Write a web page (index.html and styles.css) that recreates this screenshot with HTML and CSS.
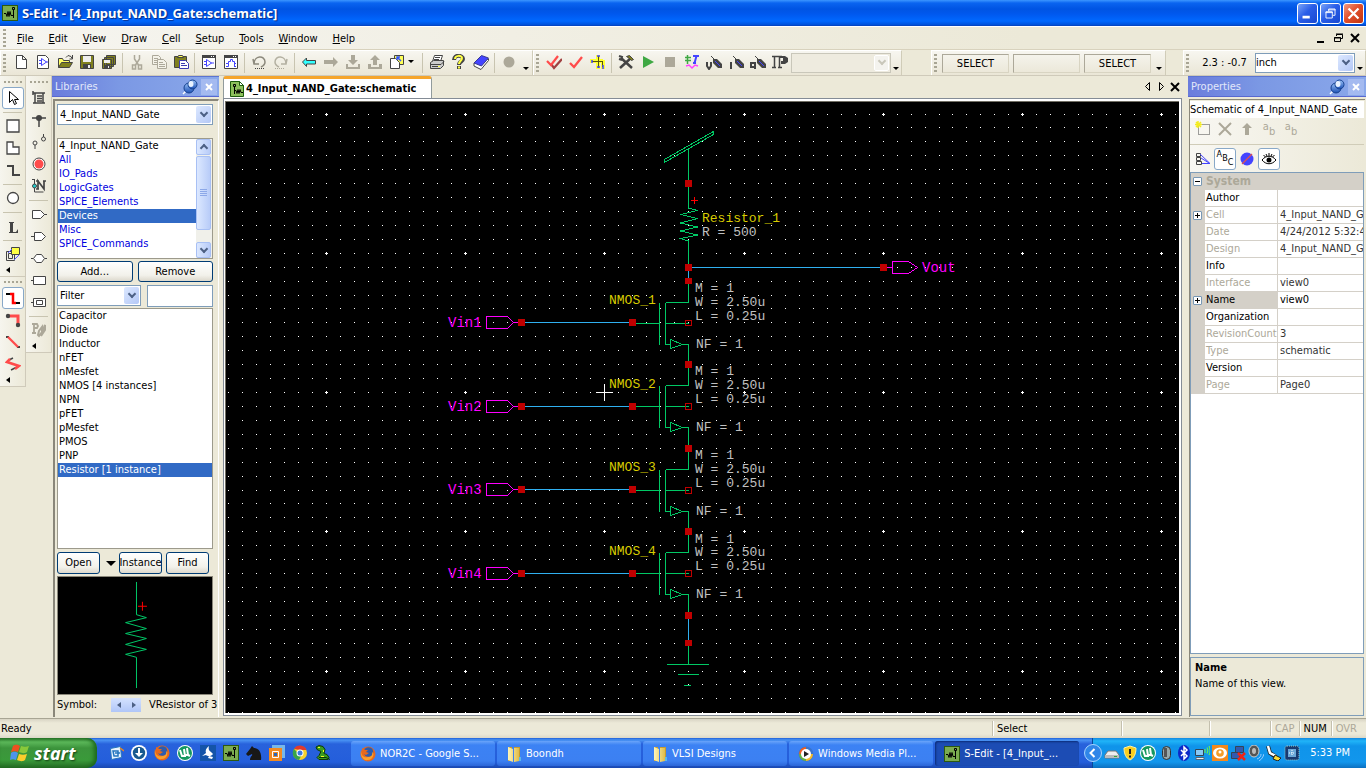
FILE: index.html
```html
<!DOCTYPE html>
<html lang="en">
<head>
<meta charset="utf-8">
<title>S-Edit - [4_Input_NAND_Gate:schematic]</title>
<link rel="stylesheet" href="styles.css">
</head>
<body>
<svg class="defs" aria-hidden="true">
  <defs>
    <linearGradient id="gBlue" x1="0" y1="0" x2="0" y2="1"><stop offset="0" stop-color="#9cc4f8"/><stop offset="1" stop-color="#1b4fb4"/></linearGradient>
    <linearGradient id="gGold" x1="0" y1="0" x2="1" y2="0"><stop offset="0" stop-color="#fff6b8"/><stop offset="1" stop-color="#e0bc48"/></linearGradient>
    <symbol id="sedit" viewBox="0 0 16 16"><path fill="#2c5a10" d="M0 0h16v16H0z"/><path fill="#7cac50" d="M1 1h14v14H1z"/><path fill="none" stroke="#000" d="M2 8.500h2l1 3 1-5 1 5 1-5 1 4h2M11.500 5v8"/><path fill="none" stroke="#000" d="M10.500 2.500h2v2h-2z"/></symbol>
    <symbol id="seditdoc" viewBox="0 0 16 16"><path fill="#8cc05c" stroke="#1c5c0c" d="M1.500 .5h9l4 4v11h-13z"/><path fill="#fff" stroke="#1c5c0c" d="M10.500 .5v4h4z"/><path fill="none" stroke="#000" d="M5.500 6v7M5 9.500h2l1 3 1-4 1 4 1-4 1 3h2M4.500 3.500h2v2h-2z"/></symbol>
    <symbol id="doc" viewBox="0 0 16 16"><path fill="#fff" stroke="#444" d="M3.500 1.500h6l4 4v9h-10zM9.500 1.500v4h4"/></symbol>
    <symbol id="docgate" viewBox="0 0 16 16"><path fill="#fff" stroke="#444" d="M2.500 1.500h8l3 3v10h-11z"/><path fill="none" stroke="#44f" d="M4 6.500h2M4 9.500h2M6.500 4.500v7l5-3.500zM11 8h2"/></symbol>
    <symbol id="open" viewBox="0 0 16 16"><path fill="#ffff66" stroke="#444" d="M1.500 13.500v-9h4l1 2h6v2"/><path fill="#80801e" stroke="#444" d="M1.500 13.500l3-5h11l-3 5z"/><path fill="none" stroke="#444" d="M9 3.500l2-2 3 1 1 2M15.500 1v4h-3"/></symbol>
    <symbol id="save" viewBox="0 0 16 16"><path fill="#80801e" stroke="#444" d="M1.500 1.500h13v13h-13z"/><path fill="#eee" d="M4 2h8v6H4z"/><path fill="#444" d="M4 10h8v4H4z"/><path fill="#eee" d="M9 11h2v3H9z"/></symbol>
    <symbol id="saveall" viewBox="0 0 16 16"><path fill="#80801e" stroke="#444" d="M5.500 1.500h9v9h-9zM3.500 3.500h9v9h-9zM1.500 5.500h9v9h-9z"/><path fill="#eee" d="M3 6h6v3H3z"/><path fill="#444" d="M3 11h6v3H3z"/><path fill="#eee" d="M7 12h1v2H7z"/></symbol>
    <symbol id="cut" viewBox="0 0 16 16"><path fill="none" stroke="#aca899" stroke-width="1.500" d="M5.500 1v4l4 6M10.500 1v4l-4 6"/><path fill="none" stroke="#aca899" stroke-width="1.500" d="M3.500 11h3v4h-3zM9.500 11h3v4h-3z"/></symbol>
    <symbol id="copy" viewBox="0 0 16 16"><path fill="#f4f2e8" stroke="#aca899" d="M1.500 1.500h6l2 2v7h-8zM3 4.500h4M3 6.500h4M3 8.500h4"/><path fill="#f4f2e8" stroke="#aca899" d="M6.500 5.500h6l3 3v6h-9zM8 8.500h4M8 10.500h6M8 12.500h6"/></symbol>
    <symbol id="paste" viewBox="0 0 16 16"><path fill="#80801e" stroke="#444" d="M1.500 2.500h12v11h-12z"/><path fill="#ffff55" stroke="#444" d="M4.500 3.500l1-2h4l1 2z"/><path fill="#fff" stroke="#3c3cb0" d="M6.500 6.500h6l3 3v5h-9zM8 9.500h4M8 11.500h6"/></symbol>
    <symbol id="wgate" viewBox="0 0 16 16"><path fill="#fff" stroke="#444" d="M1.500 1.500h13v13h-13z"/><path fill="#444" d="M1 1h14v3H1z"/><path fill="#fff" d="M10 2h1v1h-1zM12 2h1v1h-1z"/><path fill="none" stroke="#44f" d="M3 7.500h2M3 10.500h2M5.500 5.500v7l5-3.500zM10 9h3"/></symbol>
    <symbol id="wwave" viewBox="0 0 16 16"><path fill="#fff" stroke="#444" d="M1.500 1.500h13v13h-13z"/><path fill="#444" d="M1 1h14v3H1z"/><path fill="#fff" d="M10 2h1v1h-1zM12 2h1v1h-1z"/><path fill="none" stroke="#44f" d="M3 12.500h2.500v-3H3M5.500 9.500v-2h2v-2h2v2h2v5M13 9.500h-1.500M13 12.500h-2"/></symbol>
    <symbol id="undo" viewBox="0 0 16 16"><path fill="none" stroke="#8c897c" stroke-width="1.500" d="M3 10c0-9 11-9 11-2 0 3-2 4-4 5M2 5l1 5h5"/><path stroke="#444" stroke-dasharray="1 1" d="M4 14.500h10"/></symbol>
    <symbol id="redo" viewBox="0 0 16 16"><path fill="none" stroke="#b4b1a2" stroke-width="1.500" d="M13 10c0-9-11-9-11-2 0 3 2 4 4 5M14 5l-1 5H8"/><path stroke="#aca899" stroke-dasharray="1 1" d="M2 14.500h10"/></symbol>
    <symbol id="back" viewBox="0 0 16 16"><path fill="#3ff" stroke="#444" d="M1.500 8l4-4v2.500h9v3.500h-9v2.500z"/></symbol>
    <symbol id="fwd" viewBox="0 0 16 16"><path fill="#aca899" d="M15 8l-5-5v3H1v4h9v3z"/></symbol>
    <symbol id="down" viewBox="0 0 16 16"><path fill="#aca899" d="M6 1h4v5h3l-5 5-5-5h3zM1 10h2v3h10v-3h2v5H1z"/></symbol>
    <symbol id="up" viewBox="0 0 16 16"><path fill="#aca899" d="M6 11h4V6h3L8 1 3 6h3zM1 10h3v3h8v-3h3v5H1z"/></symbol>
    <symbol id="sheet" viewBox="0 0 16 16"><path fill="#ff5" stroke="#444" d="M5.500 1.500h9v9h-9z"/><path fill="#fff" stroke="#444" d="M1.500 4.500h5l4 4v6h-9z"/><path fill="none" stroke="#35f" stroke-width="1.500" d="M8 3l4 4M8 6V3h3"/></symbol>
    <symbol id="print" viewBox="0 0 16 16"><path fill="#fff" stroke="#444" d="M5.500 1.500h8l-2 6h-8z"/><path fill="#ccc" stroke="#444" d="M1.500 8.500l3-2h10v5l-3 3h-10z"/><path fill="none" stroke="#444" d="M6 3.500h5M5 5.500h5M2 10.500h10l3-3M3 12.500h8"/><path fill="#ff4" d="M9 12h2v1H9z"/></symbol>
    <symbol id="help" viewBox="0 0 16 16"><path fill="none" stroke="#444" stroke-width="4" d="M3 6c0-6 9-5 9-1 0 3-4 2-4 6M8 12v3"/><path fill="none" stroke="#ff4" stroke-width="2" d="M4 5c0-4 7-4 7-1 0 3-3 3-3 6M8 12.500v2"/></symbol>
    <symbol id="book" viewBox="0 0 16 16"><path fill="#fff" stroke="#444" d="M1 9v3l7 3.500 7.500-9V5z"/><path fill="#44f" stroke="#3a3a90" d="M1 9l7.500-7.500 7 2.500L8.500 12z"/></symbol>
    <symbol id="rec" viewBox="0 0 16 16"><circle cx="8" cy="8" r="5.500" fill="#aca899"/></symbol>
    <symbol id="dcheck" viewBox="0 0 16 16"><path fill="none" stroke="#a04040" stroke-width="2.200" d="M5 10l3 4 8-9"/><path fill="none" stroke="#ff4b4b" stroke-width="2.200" d="M1 7l4 4 7-9"/></symbol>
    <symbol id="check" viewBox="0 0 16 16"><path fill="none" stroke="#ff4b4b" stroke-width="2.300" d="M2 9l4 4 8-10"/></symbol>
    <symbol id="net" viewBox="0 0 16 16"><path fill="none" stroke="#ff3" stroke-width="4" d="M8 1v14M1 7h12M13 6v9M2 5v4"/><path fill="none" stroke="#55550c" d="M8.500 2v12M2 7.500h11M12.500 8v5"/><path fill="none" stroke="#44f" stroke-width="1.500" d="M7 2h3M2 6v3M13 11v4M7 13h3"/></symbol>
    <symbol id="tools" viewBox="0 0 16 16"><path stroke="#444" stroke-width="2.500" d="M3 4l11 10M13 4L2 14"/><path fill="none" stroke="#444" stroke-width="2" d="M1 2l3 1-1 3M1 5l3 1"/><path fill="#80801e" stroke="#444" d="M8.500 2.500l3-1 4 4-2 1-2-2z"/></symbol>
    <symbol id="play" viewBox="0 0 16 16"><path fill="#3fa843" d="M3 2l11 6-11 6z"/></symbol>
    <symbol id="stop" viewBox="0 0 16 16"><path fill="#aca899" d="M3 3h10v10H3z"/></symbol>
    <symbol id="tline" viewBox="0 0 16 16"><path stroke="#3fa843" stroke-width="1.500" d="M3.500 1v9M1 3.500h6M1 6.500h6"/><path fill="none" stroke="#44f" stroke-width="2" d="M9 2h6M12.500 2l-2 7M9 9h3"/><path fill="none" stroke="#f4f" stroke-width="1.500" d="M2 12l3-1 3 3 3-3 3 1"/></symbol>
    <symbol id="probeV" viewBox="0 0 16 16"><path fill="none" stroke="#444" stroke-width="2" d="M1 8v4l2 3 2-3V8"/><path stroke="#444" d="M5 2l4 4"/><path fill="#444" d="M7 5h4l5 5v4h-4l-5-5z"/><path stroke="#44f" d="M9 7l5 5"/></symbol>
    <symbol id="probeI" viewBox="0 0 16 16"><path stroke="#444" stroke-width="2" d="M3 8v7"/><path stroke="#444" d="M5 2l4 4"/><path fill="#444" d="M7 5h4l5 5v4h-4l-5-5z"/><path stroke="#44f" d="M9 7l5 5"/></symbol>
    <symbol id="probeQ" viewBox="0 0 16 16"><path fill="none" stroke="#444" stroke-width="2" d="M1 9h4v4H1zM5 9v6"/><path stroke="#444" d="M5 2l4 4"/><path fill="#444" d="M7 5h4l5 5v4h-4l-5-5z"/><path stroke="#44f" d="M9 7l5 5"/></symbol>
    <symbol id="ip" viewBox="0 0 16 16"><path fill="none" stroke="#444" stroke-width="1.500" d="M0 2.500h10M0 13.500h4M6 13.500h4M2.500 2v12M7.500 2v12"/><path fill="#444" d="M8 2h5l3 2v4l-3 2H9V7h2V4H8z"/></symbol>
    <symbol id="arrow" viewBox="0 0 16 16"><path fill="#fff" stroke="#000" d="M4.500 1.500v11l3-3 2 5 2-1-2-4h4z"/></symbol>
    <symbol id="square" viewBox="0 0 16 16"><path fill="#fff" stroke="#444" stroke-width="1.300" d="M2 2h12v12H2z"/></symbol>
    <symbol id="poly" viewBox="0 0 16 16"><path fill="#fff" stroke="#444" stroke-width="1.300" d="M2 2h6v5h6v7H2z"/></symbol>
    <symbol id="step" viewBox="0 0 16 16"><path fill="none" stroke="#444" stroke-width="2" d="M2 4h6v9h7"/></symbol>
    <symbol id="circle" viewBox="0 0 16 16"><circle cx="8" cy="8" r="5.500" fill="#fff" stroke="#444" stroke-width="1.300"/></symbol>
    <symbol id="ell" viewBox="0 0 16 16"><path fill="#444" d="M4 4h5v1H8v9h3l2-3v4H4v-1h1V5H4z"/></symbol>
    <symbol id="inst" viewBox="0 0 16 16"><path fill="none" stroke="#444" d="M1.500 5.500h8v9h-8zM3.500 7.500h4v5h-4z"/><path fill="#ff4" stroke="#444" d="M6.500 1.500h8v7h-8z"/><path stroke="#55f" d="M3 7l4-4M9 14l5-5"/></symbol>
    <symbol id="wire" viewBox="0 0 16 16"><path fill="none" stroke="#000" stroke-width="2" d="M1 4h7M9 13h6"/><path fill="none" stroke="#f00" stroke-width="2.500" d="M5 4h3v9h3"/></symbol>
    <symbol id="wire2" viewBox="0 0 16 16"><path fill="none" stroke="#ff4b4b" stroke-width="3" d="M3 4h10v8"/><circle cx="3" cy="4" r="2.200" fill="#444"/><circle cx="13" cy="13" r="2.200" fill="#444"/></symbol>
    <symbol id="wire3" viewBox="0 0 16 16"><path stroke="#444" stroke-width="2" d="M1 3h3M12 13h3"/><path stroke="#ff4b4b" stroke-width="2.300" d="M3 3l10 10"/></symbol>
    <symbol id="wire4" viewBox="0 0 16 16"><path fill="none" stroke="#444" stroke-width="1.500" d="M8 2L4 4M6 14l8-4"/><path fill="none" stroke="#ff4b4b" stroke-width="2.500" d="M5 3L2 6l12 4-4 3"/></symbol>
    <symbol id="symb" viewBox="0 0 16 16"><path fill="none" stroke="#444" stroke-width="1.500" d="M2 3h12M2 13h12M4 3v10M12 3v10M2 1v4M6 6h5M6 8.500h5M6 11h5"/></symbol>
    <symbol id="junction" viewBox="0 0 16 16"><path stroke="#444" stroke-width="1.500" d="M1 6h14M8 6v9"/><circle cx="8" cy="6" r="3" fill="#444"/></symbol>
    <symbol id="ports" viewBox="0 0 16 16"><g fill="none" stroke="#444"><circle cx="4" cy="9" r="2"/><circle cx="12.500" cy="5" r="2"/><path d="M4 11v4M12.500 0v3"/></g></symbol>
    <symbol id="target" viewBox="0 0 16 16"><circle cx="8" cy="8" r="6" fill="#fff" stroke="#444"/><circle cx="8" cy="8" r="4.500" fill="#ff4b4b"/></symbol>
    <symbol id="netn" viewBox="0 0 16 16"><path fill="none" stroke="#444" d="M3.500 1v13h9M1 1.500h3"/><path fill="none" stroke="#444" stroke-width="1.700" d="M7 11V3l6 8V3M5 3h3M12 3h3M5 11h3"/><circle cx="3.500" cy="8" r="2" fill="#2cc" stroke="#444"/></symbol>
    <symbol id="pin1" viewBox="0 0 16 16"><path fill="#fff" stroke="#444" d="M1.500 4.500h8l4 4-4 4h-8zM13 8.500h3"/></symbol>
    <symbol id="pin2" viewBox="0 0 16 16"><path fill="#fff" stroke="#444" d="M3.500 4.500h7l4 4-4 4h-7zM0 8.500h3"/></symbol>
    <symbol id="pin3" viewBox="0 0 16 16"><path fill="#fff" stroke="#444" d="M0 8.500h2M2.500 8.500l3-4h5l3 4-3 4h-5zM14 8.500h2"/></symbol>
    <symbol id="pin4" viewBox="0 0 16 16"><path fill="#fff" stroke="#444" d="M2.500 4.500h12v8h-12zM0 8.500h2"/></symbol>
    <symbol id="pin5" viewBox="0 0 16 16"><path fill="#fff" stroke="#444" d="M2.500 4.500h12v8h-12zM5.500 6.500h6v4h-6zM0 8.500h2"/></symbol>
    <symbol id="pgray" viewBox="0 0 16 16"><path fill="none" stroke="#aca899" stroke-width="1.800" d="M1 2h5l1 2-1 2H3M3 2v9M1 11h4"/><path fill="none" stroke="#aca899" stroke-width="2" d="M7 13l1-4 3-4v5l-3 4zM11 10l3-7v5l-4 6"/></symbol>
    <symbol id="pushpin" viewBox="0 0 16 16"><path stroke="#fff" stroke-width="1.500" d="M1 15l5-5"/><circle cx="7" cy="9" r="5" fill="url(#gBlue)" stroke="#15408e"/><circle cx="10.500" cy="5.500" r="4.500" fill="url(#gBlue)" stroke="#15408e"/><ellipse cx="9" cy="5" rx="2.500" ry="3" fill="#e8f2ff"/></symbol>
    <symbol id="pnew" viewBox="0 0 16 16"><path fill="none" stroke="#444" stroke-dasharray="1 1" d="M3.500 3.500h11v10h-11z"/><path stroke="#f4ec20" stroke-width="1.500" d="M3 0v7M0 3.500h7M1 1l5 5M6 1L1 6"/></symbol>
    <symbol id="px" viewBox="0 0 16 16"><path stroke="#aca899" stroke-width="2" d="M2 2l12 12M14 2L2 14"/></symbol>
    <symbol id="pup" viewBox="0 0 16 16"><path fill="#aca899" d="M8 2l5 5h-3v7H6V7H3z"/></symbol>
    <symbol id="ptree" viewBox="0 0 16 16"><path fill="none" stroke="#444" d="M1.500 2.500h4v3h-4zM1.500 6.500h4v3h-4zM1.500 10.500h5v3h-5z"/><path fill="none" stroke="#44f" d="M5 3l10 9.500H7M6 7l8 5"/></symbol>
    <symbol id="pno" viewBox="0 0 16 16"><circle cx="8" cy="8" r="6.500" fill="#44f"/><path stroke="#e05050" stroke-width="1.300" d="M3 13L13 3"/></symbol>
    <symbol id="eye" viewBox="0 0 16 16"><path fill="#fff" stroke="#000" d="M1 9c4-5 10-5 14 0-4 5-10 5-14 0z"/><circle cx="8" cy="9" r="2.500" fill="#000"/><path stroke="#000" d="M2.500 4l2 2M8 2v3M13.500 4l-2 2M5 3l1 2M11 3l-1 2"/></symbol>
    <symbol id="ff" viewBox="0 0 16 16"><circle cx="8" cy="8" r="7.500" fill="#e8691c"/><circle cx="8.500" cy="6" r="4.800" fill="#2d5cae"/><path fill="#f9a02c" d="M1 4c0 6 3 8 7 7 3 0 5-2 4-5 3 1 1 8-4 8C3 15 0 10 1 4z"/><path fill="#e8691c" d="M2 2l3 2h3L6 6l3 1-3 2-4-2z"/></symbol>
    <symbol id="ut" viewBox="0 0 16 16"><circle cx="8" cy="8" r="8" fill="#fff"/><circle cx="8" cy="8" r="7" fill="#149860"/><path fill="none" stroke="#fff" stroke-width="2" d="M3 5l2 6h3l-1-7M8 10h3l-1-7M11 10l2 1"/></symbol>
    <symbol id="edit" viewBox="0 0 16 16"><path fill="#e8f4ff" stroke="#2a78bc" d="M2.500 3.500l10-2 1 11-10 2z"/><path fill="none" stroke="#2476bf" stroke-width="1.500" d="M5 6h5v5H6zM7 8h5"/><path stroke="#e88422" stroke-width="1.500" d="M12 3l4 3"/></symbol>
    <symbol id="dl" viewBox="0 0 16 16"><circle cx="8" cy="8" r="8" fill="#fff"/><circle cx="8" cy="8" r="6.200" fill="#195a90"/><path fill="#fff" d="M7 3h2v5h3l-4 4-4-4h3z"/></symbol>
    <symbol id="bird" viewBox="0 0 16 16"><path fill="#1454a8" d="M0 0h16v16H0z"/><path fill="#fff" d="M9 1c-3 2-4 5-3 7l-4 3 4-1c2 2 6 1 7-1l-2-2c-2-1-3-3-2-6z"/><path fill="#fff" d="M9 11l4 1-1 2-4-1z"/></symbol>
    <symbol id="knight" viewBox="0 0 16 16"><path fill="#181818" d="M0 9l4-5 2-3 2 2c5 0 8 5 7 12H4c0-4 3-4 2-6l-4 2z"/></symbol>
    <symbol id="vm" viewBox="0 0 16 16"><path fill="#78b8e8" d="M3 0h13v13H3z"/><path fill="#f08a24" d="M0 3h13v13H0z"/><path fill="none" stroke="#fff" d="M3.500 6.500h6v6h-6z"/><path fill="#2a68bc" d="M5 8h3v3H5z"/></symbol>
    <symbol id="chrome" viewBox="0 0 16 16"><circle cx="8" cy="8" r="7" fill="#f6d22e"/><path fill="#e03a2c" d="M2 4a7 7 0 0 1 12.500 1H8z"/><path fill="#38a44a" d="M2 4a7 7 0 0 0 5 11l3-6-4-1z"/><circle cx="8" cy="8" r="3.500" fill="#fff"/><circle cx="8" cy="8" r="2.500" fill="#3a7be0"/></symbol>
    <symbol id="snake" viewBox="0 0 16 16"><path fill="#3a9a20" stroke="#0c3804" d="M1 2l3-1.500 4 1 2 3-1 4 3 1 2 3-1 2H4l-2-2 2-2 2-4-4-2z"/><path fill="#ef2" d="M3 2h2v1H3zM6 11h3v1H6zM8 5h1v2H8z"/><path fill="none" stroke="#0c3804" d="M4 12.500h7l4 2"/></symbol>
    <symbol id="folder" viewBox="0 0 16 16"><path fill="#c79c30" d="M2 1h4v14H2zM8 1h6v14H8z"/><path fill="url(#gGold)" d="M2 1l5 2v13l-5-2zM8 2h5v13l-5 1z"/><path fill="#5cb8e8" d="M13 11h2v4h-2z"/></symbol>
    <symbol id="wmp" viewBox="0 0 16 16"><circle cx="8" cy="8" r="7.500" fill="#3974cc"/><path fill="#f06020" d="M8 8V1A7 7 0 0 0 1 8z"/><path fill="#64b444" d="M8 8H1a7 7 0 0 0 7 7z"/><path fill="#f4bb28" d="M8 8v7a7 7 0 0 0 7-7z"/><circle cx="8" cy="8" r="5" fill="#fff"/><path fill="#222" d="M6 5l5 3-5 3z"/></symbol>
    <symbol id="winflag" viewBox="0 0 20 20"><path fill="#ee5020" d="M3 3c3-2 5-1 7 0L8 9C6 8 4 8 1 9z"/><path fill="#88c83a" d="M11 3c3 1 5 1 8 0l-2 6c-3 2-5 1-8 0z"/><path fill="#4d94ea" d="M1 10c3-2 5-1 7 0l-2 7c-3-1-4-1-6 0z"/><path fill="#fbcd2c" d="M9 11c3 1 5 1 8 0l-2 6c-3 2-5 1-8 0z"/></symbol>
    <symbol id="drive" viewBox="0 0 16 16"><path fill="#eee" stroke="#777" d="M1 10l3-4h8l3 4v3H1z"/><path fill="#bbb" d="M1 10h14v3H1z"/><path fill="#3a3" d="M10 11h3v1h-3z"/></symbol>
    <symbol id="shield" viewBox="0 0 16 16"><path fill="#f8cf20" stroke="#fff2a0" d="M8 1l6 2c0 6-2 10-6 12C4 13 2 9 2 3z"/><path stroke="#222" stroke-width="2" d="M8 4v5M8 10.500v2"/></symbol>
    <symbol id="pill" viewBox="0 0 16 16"><rect x="4.500" y="1.500" width="8" height="13" rx="4" fill="#9aa" stroke="#333"/><path fill="#555" d="M6 3h3v9H6z"/></symbol>
    <symbol id="bt" viewBox="0 0 16 16"><ellipse cx="8" cy="8" rx="6" ry="8" fill="#0c28c8"/><path fill="none" stroke="#fff" stroke-width="1.500" d="M5 5l6 6-3 3V2l3 3-6 6"/></symbol>
    <symbol id="netw" viewBox="0 0 16 16"><path fill="#88c8f4" stroke="#345" d="M1.500 4.500h8v6h-8z"/><path fill="#eee" stroke="#567" d="M2 12.500h8v2H2z"/><path fill="none" stroke="#6e5" stroke-width="1.200" d="M11 4v4M13 2.500c1 2 1 4 0 6M15 1c1.500 3 1.500 6 0 9"/></symbol>
    <symbol id="oeye" viewBox="0 0 16 16"><path fill="#f4891c" d="M0 0h16v16H0z"/><ellipse cx="8" cy="8" rx="7" ry="5.500" fill="#fff"/><circle cx="8" cy="8" r="3.800" fill="#f49c28"/><circle cx="8" cy="7" r="1.500" fill="#fff"/></symbol>
    <symbol id="netx" viewBox="0 0 16 16"><path fill="#315ab0" stroke="#345" d="M5.500 1.500h8v6h-8zM1.500 7.500h8v6h-8z"/><path stroke="#ee2418" stroke-width="2.500" d="M8 8l7 7M15 8l-7 7"/></symbol>
    <symbol id="spk" viewBox="0 0 16 16"><ellipse cx="6" cy="6" rx="5" ry="6" fill="#555" stroke="#ccc"/><ellipse cx="6" cy="6" rx="2" ry="3" fill="#bbb"/><path fill="none" stroke="#9cf" d="M9 14c3-1 4-3 4-5M11 16c3-2 4-4 5-7"/></symbol>
    <symbol id="cable" viewBox="0 0 16 16"><path fill="none" stroke="#222" stroke-width="4" d="M2 1l2 7 6 4"/><path fill="none" stroke="#fff" stroke-width="2.500" d="M2 1l2 7 6 3"/><path fill="#fd3" stroke="#222" d="M9 10l6 3-3 3-5-2z"/></symbol>
    <symbol id="chip" viewBox="0 0 16 16"><rect x="1" y="1" width="14" height="14" rx="2" fill="#183a70" stroke="#9cc" stroke-dasharray="1 1"/><path fill="#6ba8d8" d="M4 4h8v8H4z"/><path stroke="#fff" stroke-dasharray="1 1" d="M5 8h6M8 5v6"/></symbol>
  </defs>
</svg>

<div class="app">
  <header class="title">
    <svg class="ic"><use href="#sedit"/></svg>
    <h1>S-Edit - [4_Input_NAND_Gate:schematic]</h1>
    <button class="cap" aria-label="Minimize"><svg viewBox="0 0 21 21"><path fill="#fff" d="M5 13h8v3H5z"/></svg></button>
    <button class="cap" aria-label="Restore"><svg viewBox="0 0 21 21"><path fill="none" stroke="#fff" d="M8.500 8V5.500h7v7H13M5.500 8.500h7v7h-7zM5 9.500h8M8 6.500h8"/></svg></button>
    <button class="cap close" aria-label="Close"><svg viewBox="0 0 21 21"><path stroke="#fff" stroke-width="2.500" d="M5 5l11 11M16 5L5 16"/></svg></button>
  </header>

  <nav class="menu">
    <i class="grip"></i>
    <button><u>F</u>ile</button><button><u>E</u>dit</button><button><u>V</u>iew</button><button><u>D</u>raw</button><button><u>C</u>ell</button><button><u>S</u>etup</button><button><u>T</u>ools</button><button><u>W</u>indow</button><button><u>H</u>elp</button>
    <span class="mdi">
      <button aria-label="Minimize document"><svg viewBox="0 0 12 12"><path d="M2 9h7v2H2z"/></svg></button>
      <button aria-label="Restore document"><svg viewBox="0 0 12 12"><path fill="none" stroke="#000" d="M4.500 4V2.500h6v4H9M2.500 5.500h6v4h-6zM2 6h7M4 2h7"/></svg></button>
      <button aria-label="Close document"><svg viewBox="0 0 12 12"><path stroke="#000" stroke-width="2" d="M2 2l8 8M10 2l-8 8"/></svg></button>
    </span>
  </nav>

  <div class="tools">
    <div class="band">
      <i class="grip"></i>
      <button class="tb" aria-label="New"><svg class="ic"><use href="#doc"/></svg></button>
      <button class="tb" aria-label="New design"><svg class="ic"><use href="#docgate"/></svg></button>
      <button class="tb" aria-label="Open file"><svg class="ic"><use href="#open"/></svg></button>
      <button class="tb" aria-label="Save"><svg class="ic"><use href="#save"/></svg></button>
      <button class="tb" aria-label="Save all"><svg class="ic"><use href="#saveall"/></svg></button>
      <i class="sep"></i>
      <button class="tb" aria-label="Cut"><svg class="ic"><use href="#cut"/></svg></button>
      <button class="tb" aria-label="Copy"><svg class="ic"><use href="#copy"/></svg></button>
      <button class="tb" aria-label="Paste"><svg class="ic"><use href="#paste"/></svg></button>
      <i class="sep"></i>
      <button class="tb" aria-label="Symbol view"><svg class="ic"><use href="#wgate"/></svg></button>
      <button class="tb" aria-label="Waveform view"><svg class="ic"><use href="#wwave"/></svg></button>
      <i class="sep"></i>
      <button class="tb" aria-label="Undo"><svg class="ic"><use href="#undo"/></svg></button>
      <button class="tb" aria-label="Redo"><svg class="ic"><use href="#redo"/></svg></button>
      <i class="sep"></i>
      <button class="tb" aria-label="Back"><svg class="ic"><use href="#back"/></svg></button>
      <button class="tb" aria-label="Forward"><svg class="ic"><use href="#fwd"/></svg></button>
      <button class="tb" aria-label="Push into"><svg class="ic"><use href="#down"/></svg></button>
      <button class="tb" aria-label="Pop out"><svg class="ic"><use href="#up"/></svg></button>
      <button class="tb wide" aria-label="View sheet"><svg class="ic"><use href="#sheet"/></svg><b class="tri"></b></button>
      <i class="sep"></i>
      <button class="tb" aria-label="Print"><svg class="ic"><use href="#print"/></svg></button>
      <button class="tb" aria-label="Help"><svg class="ic"><use href="#help"/></svg></button>
      <button class="tb" aria-label="Manual"><svg class="ic"><use href="#book"/></svg></button>
      <i class="sep"></i>
      <button class="tb" aria-label="Record"><svg class="ic"><use href="#rec"/></svg></button>
      <button class="more" aria-label="More standard tools"><b class="tri"></b></button>
    </div>
    <div class="band">
      <i class="grip"></i>
      <button class="tb" aria-label="Check hierarchy"><svg class="ic"><use href="#dcheck"/></svg></button>
      <button class="tb" aria-label="Check view"><svg class="ic"><use href="#check"/></svg></button>
      <button class="tb" aria-label="Highlight net"><svg class="ic"><use href="#net"/></svg></button>
      <i class="sep"></i>
      <button class="tb" aria-label="Simulation setup"><svg class="ic"><use href="#tools"/></svg></button>
      <button class="tb" aria-label="Start simulation"><svg class="ic"><use href="#play"/></svg></button>
      <button class="tb" aria-label="Stop simulation"><svg class="ic"><use href="#stop"/></svg></button>
      <button class="tb" aria-label="T-Spice"><svg class="ic"><use href="#tline"/></svg></button>
      <button class="tb" aria-label="Probe voltage"><svg class="ic"><use href="#probeV"/></svg></button>
      <button class="tb" aria-label="Probe current"><svg class="ic"><use href="#probeI"/></svg></button>
      <button class="tb" aria-label="Probe charge"><svg class="ic"><use href="#probeQ"/></svg></button>
      <button class="tb" aria-label="Interactive probe"><svg class="ic"><use href="#ip"/></svg></button>
      <span class="combo off"><select disabled aria-label="Analysis"><option></option></select><i class="drop"></i></span>
      <button class="more slim" aria-label="More simulation tools"><b class="tri"></b></button>
    </div>
    <div class="band modes">
      <i class="grip"></i>
      <output>SELECT</output><output></output><output>SELECT</output>
      <button class="more" aria-label="More mouse modes"><b class="tri"></b></button>
    </div>
    <div class="band locator">
      <i class="grip"></i>
      <label for="units">2.3 : -0.7</label>
      <span class="combo"><select id="units"><option>inch</option></select><i class="drop"></i></span>
      <button class="more slim" aria-label="More locator tools"><b class="tri"></b></button>
    </div>
  </div>

  <main class="work">
    <div class="rail">
      <div class="strip">
        <i class="grip h"></i>
        <button class="tb on" aria-label="Select"><svg class="ic"><use href="#arrow"/></svg></button>
        <i class="sep h"></i>
        <button class="tb" aria-label="Box"><svg class="ic"><use href="#square"/></svg></button>
        <button class="tb" aria-label="Polygon"><svg class="ic"><use href="#poly"/></svg></button>
        <button class="tb" aria-label="Path"><svg class="ic"><use href="#step"/></svg></button>
        <i class="sep h"></i>
        <button class="tb" aria-label="Circle"><svg class="ic"><use href="#circle"/></svg></button>
        <i class="sep h"></i>
        <button class="tb" aria-label="Label"><svg class="ic"><use href="#ell"/></svg></button>
        <i class="sep h"></i>
        <button class="tb" aria-label="Instance"><svg class="ic"><use href="#inst"/></svg></button>
        <b class="left"></b>
      </div>
      <div class="strip">
        <i class="grip h"></i>
        <button class="tb on" aria-label="Wire 90 degrees"><svg class="ic"><use href="#wire"/></svg></button>
        <button class="tb" aria-label="Wire with corners"><svg class="ic"><use href="#wire2"/></svg></button>
        <button class="tb" aria-label="Wire 45 degrees"><svg class="ic"><use href="#wire3"/></svg></button>
        <button class="tb" aria-label="Wire all angle"><svg class="ic"><use href="#wire4"/></svg></button>
        <b class="left"></b>
      </div>
    </div>
    <div class="rail">
      <div class="strip">
        <i class="grip h"></i>
        <button class="tb" aria-label="Update symbol"><svg class="ic"><use href="#symb"/></svg></button>
        <button class="tb" aria-label="Solder point"><svg class="ic"><use href="#junction"/></svg></button>
        <button class="tb" aria-label="Net caps"><svg class="ic"><use href="#ports"/></svg></button>
        <button class="tb" aria-label="Evaluated"><svg class="ic"><use href="#target"/></svg></button>
        <button class="tb" aria-label="Net label"><svg class="ic"><use href="#netn"/></svg></button>
        <i class="sep h"></i>
        <button class="tb" aria-label="In port"><svg class="ic"><use href="#pin1"/></svg></button>
        <button class="tb" aria-label="Out port"><svg class="ic"><use href="#pin2"/></svg></button>
        <button class="tb" aria-label="In-out port"><svg class="ic"><use href="#pin3"/></svg></button>
        <button class="tb" aria-label="Other port"><svg class="ic"><use href="#pin4"/></svg></button>
        <button class="tb" aria-label="Global port"><svg class="ic"><use href="#pin5"/></svg></button>
        <i class="sep h"></i>
        <button class="tb" aria-label="Property"><svg class="ic"><use href="#pgray"/></svg></button>
        <b class="left"></b>
      </div>
    </div>

    <section class="pane libs">
      <h2>Libraries <button aria-label="Pin libraries"><svg class="ic"><use href="#pushpin"/></svg></button><button class="x" aria-label="Close libraries"><svg viewBox="0 0 12 12"><path stroke="#fff" stroke-width="2" d="M3 3l6 6M9 3L3 9"/></svg></button></h2>
      <div class="body">
        <span class="combo tall"><select aria-label="Design"><option>4_Input_NAND_Gate</option></select><i class="drop"></i></span>
        <div class="box tree">
          <ul role="listbox" aria-label="Libraries">
            <li role="option" class="first">4_Input_NAND_Gate</li><li role="option">All</li><li role="option">IO_Pads</li><li role="option">LogicGates</li><li role="option">SPICE_Elements</li><li role="option" class="sel" aria-selected="true">Devices</li><li role="option">Misc</li><li role="option">SPICE_Commands</li>
          </ul>
          <div class="scroll"><i class="arr up"></i><i class="thumb"></i><i class="arr"></i></div>
        </div>
        <div class="pair"><button class="btn">Add...</button><button class="btn">Remove</button></div>
        <div class="filter"><span class="combo tall"><select aria-label="Filter mode"><option>Filter</option></select><i class="drop"></i></span><input type="text" aria-label="Filter text"></div>
        <ul class="box cells" role="listbox" aria-label="Cells">
          <li role="option">Capacitor</li><li role="option">Diode</li><li role="option">Inductor</li><li role="option">nFET</li><li role="option">nMesfet</li><li role="option">NMOS [4 instances]</li><li role="option">NPN</li><li role="option">pFET</li><li role="option">pMesfet</li><li role="option">PMOS</li><li role="option">PNP</li><li role="option" class="sel" aria-selected="true">Resistor [1 instance]</li>
        </ul>
        <div class="acts"><button class="btn">Open</button><button class="plain" aria-label="Open options"><b class="tri big"></b></button><button class="btn tight">Instance</button><button class="btn">Find</button></div>
        <div class="preview"><svg viewBox="0 0 154 118"><path fill="none" stroke="#00c868" d="M78.500 5v33l10 3-21 5 21 6-21 5 21 5-21 6 21 5-21 5 11 3v31"/><path stroke="#f00" d="M80 29.500h9M84.500 25v9"/></svg></div>
        <div class="symrow"><span>Symbol:</span><span class="spin"><button aria-label="Previous symbol"><i></i></button><button aria-label="Next symbol"><i class="r"></i></button></span><span>VResistor of 3</span></div>
      </div>
    </section>

    <section class="editor">
      <div class="tabs">
        <button class="tab"><svg class="ic"><use href="#seditdoc"/></svg>4_Input_NAND_Gate:schematic</button>
        <button class="nav" aria-label="Previous tab"><svg viewBox="0 0 12 12"><path fill="none" stroke="#000" d="M8.500 1.500v8L4.500 5.500z"/></svg></button>
        <button class="nav" aria-label="Next tab"><svg viewBox="0 0 12 12"><path fill="none" stroke="#000" d="M4.500 1.500v8l4-4z"/></svg></button>
        <button class="nav" aria-label="Close tab"><svg viewBox="0 0 12 12"><path stroke="#000" stroke-width="2" d="M2 2l8 8M10 2l-8 8"/></svg></button>
      </div>
      <div class="frame">
        <svg class="sheet" role="img" aria-label="Four-input NAND gate schematic">
          <g transform="translate(-226 -102)">
            <path id="grid" stroke="#fff" shape-rendering="crispEdges"/>
            <g class="wires">
              <path d="M688.500 267v14M688 267.500h196M521 322.500h112M521 406.500h112M521 489.500h112M521 573.500h112M688.500 615v28"/>
            </g>
            <g class="part">
              <path d="M664.500 159.500l49-28v3l-49 28zM688.500 149v59l9 2.500-17 4 17 4-17 4.500 17 4-17 4 17 4-17 3.500 8 2.500v26M688.500 643v21M667 664.500h42M678 674.500h21M684 685.500h7"/>
              <path d="M688.500 281v21.500H666M659.500 303v42M665.500 303v41.500h5M665.500 323.500h23M633 323.500h26M670.500 339.500v9l12-4zM683 344.500h5.500v20"/>
              <path d="M688.500 364v21.500H666M659.500 386v42M665.500 386v41.500h5M665.500 406.500h23M633 406.500h26M670.500 422.500v9l12-4zM683 427.500h5.500v21"/>
              <path d="M688.500 448v21.500H666M659.500 470v42M665.500 470v41.500h5M665.500 490.500h23M633 490.500h26M670.500 506.500v9l12-4zM683 511.500h5.500v21"/>
              <path d="M688.500 531v21.500H666M659.500 553v42M665.500 553v41.500h5M665.500 573.500h23M633 573.500h26M670.500 589.500v9l12-4zM683 594.500h5.500v21"/>
            </g>
            <g class="port">
              <path d="M486.500 316.500h21l6 6-6 6h-21zM514 322.500h7M486.500 400.500h21l6 6-6 6h-21zM514 406.500h7M486.500 483.500h21l6 6-6 6h-21zM514 489.500h7M486.500 567.500h21l6 6-6 6h-21zM514 573.500h7M892.500 261.500h16l9 6-9 6h-16zM884 267.500h8"/>
            </g>
            <path fill="#c00000" d="M685 180h7v7h-7zM685 264h7v7h-7zM685 278h7v6h-7zM685 361h7v7h-7zM685 445h7v7h-7zM685 528h7v7h-7zM685 612h7v7h-7zM685 640h7v6h-7zM880 264h7v7h-7zM518 319h7v7h-7zM629 319h7v7h-7zM518 403h7v7h-7zM629 403h7v7h-7zM518 486h7v7h-7zM629 486h7v7h-7zM518 570h7v7h-7zM629 570h7v7h-7z"/>
            <path fill="none" stroke="#c00000" d="M685.500 320.500h6v5h-6zM685.500 403.500h6v6h-6zM685.500 487.500h6v6h-6zM685.500 570.500h6v6h-6z"/>
            <path stroke="#f00" d="M691 200.500h7M694.500 197v7"/>
            <path stroke="#fff" d="M596 392.500h17M604.500 384v17"/>
            <g class="name"><text x="702" y="222">Resistor_1</text><text x="609" y="304">NMOS_1</text><text x="609" y="388">NMOS_2</text><text x="609" y="471">NMOS_3</text><text x="609" y="555">NMOS_4</text></g>
            <g class="val">
              <text x="702" y="236">R = 500</text>
              <text x="695" y="292">M = 1</text><text x="695" y="306">W = 2.50u</text><text x="695" y="320">L = 0.25u</text><text x="696" y="348">NF = 1</text>
              <text x="695" y="375">M = 1</text><text x="695" y="389">W = 2.50u</text><text x="695" y="403">L = 0.25u</text><text x="696" y="431">NF = 1</text>
              <text x="695" y="459">M = 1</text><text x="695" y="473">W = 2.50u</text><text x="695" y="487">L = 0.25u</text><text x="696" y="515">NF = 1</text>
              <text x="695" y="543">M = 1</text><text x="695" y="556">W = 2.50u</text><text x="695" y="570">L = 0.25u</text><text x="696" y="598">NF = 1</text>
            </g>
            <g class="io"><text x="448" y="327">Vin1</text><text x="448" y="411">Vin2</text><text x="448" y="494">Vin3</text><text x="448" y="578">Vin4</text><text x="922" y="272">Vout</text></g>
          </g>
        </svg>
      </div>
    </section>

    <section class="pane props">
      <h2>Properties <button aria-label="Pin properties"><svg class="ic"><use href="#pushpin"/></svg></button><button class="x" aria-label="Close properties"><svg viewBox="0 0 12 12"><path stroke="#fff" stroke-width="2" d="M3 3l6 6M9 3L3 9"/></svg></button></h2>
      <div class="body">
        <p class="what">Schematic of 4_Input_NAND_Gate</p>
        <div class="ptools">
          <button class="tb" aria-label="Add property"><svg class="ic"><use href="#pnew"/></svg></button><button class="tb" aria-label="Delete property"><svg class="ic"><use href="#px"/></svg></button><button class="tb" aria-label="Promote"><svg class="ic"><use href="#pup"/></svg></button><button class="tb ab"><span>a</span><span>b</span></button><button class="tb ab"><span>a</span><span>b</span></button>
        </div>
        <div class="ptools two">
          <button class="tb" aria-label="Hierarchy"><svg class="ic"><use href="#ptree"/></svg></button><button class="tb on abc">A<span>B</span><sub>C</sub></button><button class="tb" aria-label="Disable"><svg class="ic"><use href="#pno"/></svg></button><button class="tb on" aria-label="Show"><svg class="ic"><use href="#eye"/></svg></button>
        </div>
        <div class="gridbox">
          <table>
            <colgroup><col class="c1"><col class="c2"><col></colgroup>
            <tr class="grp"><td><button class="pm" aria-label="Collapse System"></button></td><th colspan="2">System</th></tr>
            <tr><td></td><th class="k">Author</th><td></td></tr>
            <tr><td><button class="pm plus" aria-label="Expand Cell"></button></td><th>Cell</th><td>4_Input_NAND_Gate</td></tr>
            <tr><td></td><th>Date</th><td>4/24/2012 5:32:43 PM</td></tr>
            <tr><td></td><th>Design</th><td>4_Input_NAND_Gate</td></tr>
            <tr><td></td><th class="k">Info</th><td></td></tr>
            <tr><td></td><th>Interface</th><td>view0</td></tr>
            <tr class="cur"><td><button class="pm plus" aria-label="Expand Name"></button></td><th class="k">Name</th><td>view0</td></tr>
            <tr><td></td><th class="k">Organization</th><td></td></tr>
            <tr><td></td><th>RevisionCount</th><td>3</td></tr>
            <tr><td></td><th>Type</th><td>schematic</td></tr>
            <tr><td></td><th class="k">Version</th><td></td></tr>
            <tr><td></td><th>Page</th><td>Page0</td></tr>
          </table>
        </div>
        <div class="desc"><h3>Name</h3><p>Name of this view.</p></div>
      </div>
    </section>
  </main>

  <footer class="status"><span class="grow">Ready</span><span class="s1">Select</span><span class="s2"></span><span class="s3"></span><span class="dim">CAP</span><span>NUM</span><span class="dim">OVR</span></footer>

  <nav class="taskbar">
    <button class="start"><svg><use href="#winflag"/></svg>start</button>
    <div class="quick">
      <button aria-label="Editor"><svg class="ic"><use href="#edit"/></svg></button><button aria-label="Downloader"><svg class="ic"><use href="#dl"/></svg></button><button aria-label="Firefox"><svg class="ic"><use href="#ff"/></svg></button><button aria-label="Torrents"><svg class="ic"><use href="#ut"/></svg></button><button aria-label="Bird"><svg class="ic"><use href="#bird"/></svg></button><button aria-label="S-Edit"><svg class="ic"><use href="#sedit"/></svg></button><button aria-label="Chess"><svg class="ic"><use href="#knight"/></svg></button><button aria-label="Virtual machine"><svg class="ic"><use href="#vm"/></svg></button><button aria-label="Chrome"><svg class="ic"><use href="#chrome"/></svg></button><button aria-label="Snake"><svg class="ic"><use href="#snake"/></svg></button>
    </div>
    <div class="tasks">
      <button><svg class="ic"><use href="#ff"/></svg>NOR2C - Google S...</button><button><svg class="ic"><use href="#folder"/></svg>Boondh</button><button><svg class="ic"><use href="#folder"/></svg>VLSI Designs</button><button><svg class="ic"><use href="#wmp"/></svg>Windows Media Pl...</button><button class="act"><svg class="ic"><use href="#sedit"/></svg>S-Edit - [4_Input_...</button>
    </div>
    <div class="tray">
      <button class="chev" aria-label="Show hidden icons"><svg viewBox="0 0 18 18"><circle cx="9" cy="9" r="8.500" fill="#2f86e8" stroke="#a8d4ff"/><path fill="none" stroke="#fff" stroke-width="2" d="M10.500 5l-4 4 4 4"/></svg></button>
      <svg class="ic"><use href="#drive"/></svg><svg class="ic"><use href="#shield"/></svg><svg class="ic"><use href="#ut"/></svg><svg class="ic"><use href="#pill"/></svg><svg class="ic"><use href="#bt"/></svg><svg class="ic"><use href="#netw"/></svg><svg class="ic"><use href="#oeye"/></svg><svg class="ic"><use href="#netx"/></svg><svg class="ic"><use href="#spk"/></svg><svg class="ic"><use href="#cable"/></svg><svg class="ic"><use href="#chip"/></svg>
      <time>5:33 PM</time>
    </div>
  </nav>
</div>
<script src="grid.js"></script>
</body>
</html>
```
FILE: grid.js
```
// Snap grid: a dot at every step, a small cross at every tenth one.
(function () {
  var step = 13.926, x0 = 326.3, y0 = 114, d = '';
  for (var j = 0; j < 80; j++) {
    var y = Math.floor(y0 + j * step);
    for (var i = -7; i < 130; i++) {
      var x = Math.floor(x0 + i * step);
      d += 'M' + x + ' ' + (y + 0.5) + 'h1';
      if (i % 10 === 0 && j % 10 === 0) {
        d += 'M' + (x - 1) + ' ' + (y + 0.5) + 'h3M' + (x + 0.5) + ' ' + (y - 1) + 'v3';
      }
    }
  }
  document.getElementById('grid').setAttribute('d', d);
})();
```
FILE: styles.css
```css
* { box-sizing: border-box; }
body { margin: 0; background: #ece9d8; color: #000; font: 11px/14px "DejaVu Sans Condensed", "Noto Sans", sans-serif; overflow: hidden; }
button, select, input { font: inherit; color: inherit; margin: 0; padding: 0; border: 0; background: none; border-radius: 0; }
h1, h2, h3, p, ul { margin: 0; padding: 0; list-style: none; font-weight: normal; font-size: inherit; }
.defs { position: absolute; width: 0; height: 0; }
.app { display: flex; flex-direction: column; height: 100vh; }
.ic { width: 16px; height: 16px; flex: none; display: block; }

/* title bar */
.title { display: flex; align-items: center; flex: none; height: 26px; padding: 0 2px; gap: 2px; background: linear-gradient(#3c96ff 0, #0a64f0 3px, #0054e3 9px, #0058ee 14px, #0068ff 21px, #0050d8 25px, #0a3cb0); }
.title h1 { flex: 1; padding-left: 2px; color: #fff; font: bold 13px/20px "Noto Sans", sans-serif; text-shadow: 1px 1px 1px #0a2a80; }
.cap { width: 21px; height: 21px; border: 1px solid #fff; border-radius: 3px; background: linear-gradient(135deg, #7aa4f8, #2a5ee8 45%, #1848d0); }
.cap svg { display: block; width: 19px; height: 19px; }
.cap.close { background: linear-gradient(135deg, #f09a80, #e2502c 45%, #c03410); }

/* menu */
.menu { display: flex; align-items: center; flex: none; height: 23px; padding: 0 5px 0 0; background: linear-gradient(90deg, #f6f5f0, #ece9d8 75%); border-top: 1px solid #fff; }
.menu > button { padding: 1px 7px 0; margin-right: 1px; }
.mdi { display: flex; gap: 5px; margin-left: auto; }
.mdi svg, .nav svg, .x svg { display: block; width: 12px; height: 12px; }
.grip { flex: none; width: 3px; height: 18px; margin: 0 4px 0 3px; background: repeating-linear-gradient(#a8a594 0 2px, transparent 2px 4px); }
.grip.h { width: 18px; height: 2px; margin: 5px 0 4px; background: repeating-linear-gradient(90deg, #a8a594 0 2px, transparent 2px 4px); }

/* toolbars */
.tools { display: flex; flex: none; height: 27px; border-top: 1px solid #d8d2bd; border-bottom: 1px solid #cfcaba; }
.band { display: flex; align-items: center; flex: none; border-top: 1px solid #fff; border-right: 1px solid #d0ccb8; background: linear-gradient(#f7f6f0, #eae6d6); box-shadow: inset 1px 0 #fff; }
.tb { display: flex; align-items: center; justify-content: center; flex: none; width: 22px; height: 22px; }
.tools .tb { margin-bottom: 2px; }
.tb.on { border: 1px solid #88a8c8; border-radius: 3px; background: #fff; }
.tb.wide { width: 34px; gap: 3px; justify-content: flex-start; padding-left: 3px; }
.wide .tri { margin-bottom: 2px; }
.sep { flex: none; width: 1px; height: 20px; margin: 0 3px 0 2px; background: #c8c4b0; }
.sep.h { width: 19px; height: 1px; margin: 3px 0 2px; }
.tri { display: block; border: 3px solid transparent; border-top-color: #000; border-bottom: 0; }
.tri.big { border-width: 5px 5px 0; }
.left { display: block; align-self: flex-start; margin: 2px 0 0 6px; border: 3px solid transparent; border-right: 4px solid #000; border-left: 0; }
.more { display: flex; align-items: flex-end; justify-content: center; width: 12px; height: 14px; align-self: flex-end; padding-bottom: 5px; }
.more.slim { width: 10px; }
.tools .combo { width: 100px; height: 20px; }
.modes { margin-left: 29px; }
.modes output { width: 67px; height: 19px; margin-right: 4px; border: 1px solid #aca899; border-right-color: #d8d4c2; border-bottom-color: #d8d4c2; text-align: center; line-height: 17px; }
.modes .grip, .locator .grip { margin-right: 5px; }
.modes output:last-of-type { margin-right: 2px; }
.locator { flex: 1; margin-left: 17px; }
.locator label { margin: 0 auto; }

.combo { position: relative; display: block; background: #fff; border: 1px solid #7f9db9; }
.combo select { display: block; width: 100%; height: 100%; padding: 0 18px 0 2px; appearance: none; }
.tools .combo select { padding-left: 0; }
.combo.off { background: #eeebdf; border-color: #c9c7ba; }
.drop { position: absolute; top: 1px; right: 1px; bottom: 1px; width: 15px; background: linear-gradient(135deg, #dce8ff, #b4c8f6); border-radius: 2px; pointer-events: none; }
.drop::after { content: ""; position: absolute; left: 5px; top: calc(50% - 5px); width: 4px; height: 4px; border: solid #4d6185; border-width: 0 2px 2px 0; transform: rotate(45deg); }
.off .drop { background: #f4f3ee; border: 1px solid #fff; }
.off .drop::after { border-color: #c9c7ba; left: 4px; }
.tall { flex: none; height: 21px; }

/* work area */
.work { display: flex; flex: 1; min-height: 0; }
.rail { flex: none; width: 26px; }
.strip { display: flex; flex-direction: column; align-items: center; padding-bottom: 3px; background: linear-gradient(90deg, #f6f5ee, #ece9d8); border-right: 1px solid #cfcaba; border-bottom: 1px solid #cfcaba; }
.strip + .strip .grip { margin-top: 4px; }

.pane { display: flex; flex-direction: column; flex: none; }
.pane h2 { display: flex; align-items: center; flex: none; height: 21px; padding: 0 2px 0 3px; gap: 3px; background: linear-gradient(90deg, #6a7cdc, #7b98e4 40%, #8aa8ea); color: #e2e8fa; border-top: 1px solid #5c74d0; border-bottom: 1px solid #5868d0; }
.pane h2 button:first-of-type { margin-left: auto; }
.pane .x { width: 16px; height: 16px; padding: 2px; background: #a4baf0; }
.body { flex: 1; min-height: 0; display: flex; flex-direction: column; border: solid #8a877a; border-width: 1px 0 0 1px; }
.libs { width: 167px; }
.libs .body { margin: 2px 0 1px 1px; padding: 3px 5px 0 2px; border-width: 2px 0 0 2px; border-right: 1px solid #fff; }
.box { border: 1px solid #9c9a8c; background: #fff; }
.box li { height: 14px; padding-left: 1px; white-space: nowrap; }
.box .sel { background: #316ac5; color: #fff; }
.tree { display: flex; flex: none; height: 121px; margin-top: 13px; }
.tree ul { flex: 1; }
.tree li { color: #0000e0; }
.tree .first { color: #000; }
.tree .sel { color: #fff; }
.scroll { display: flex; flex-direction: column; justify-content: space-between; flex: none; width: 16px; background: #f0f0ea; }
.arr, .thumb { position: relative; display: block; width: 15px; border: 1px solid #a8c0f4; border-radius: 2px; background: linear-gradient(90deg, #dce8ff, #b8ccf8); }
.arr { height: 16px; }
.arr::after { content: ""; position: absolute; left: 4px; top: 3px; width: 4px; height: 4px; border: solid #4d6185; border-width: 0 2px 2px 0; transform: rotate(45deg); }
.arr.up::after { top: 5px; transform: rotate(225deg); }
.thumb { height: 74px; margin-bottom: 12px; }
.thumb::after { content: ""; position: absolute; left: 3px; top: 32px; width: 7px; height: 7px; background: repeating-linear-gradient(#8ca8e8 0 1px, transparent 1px 2px); }
.pair { display: grid; grid-template-columns: 1fr 1fr; gap: 5px; margin-top: 2px; flex: none; }
.btn { height: 21px; border: 1px solid #003c74; border-radius: 3px; background: linear-gradient(#fff, #f2f1ea 70%, #dcd8cc); }
.btn.tight { display: flex; align-items: center; justify-content: center; }
.filter { display: grid; grid-template-columns: 84px 1fr; gap: 6px; margin-top: 3px; flex: none; }
.filter input { min-width: 0; border: 1px solid #7f9db9; background: #fff; height: 22px; }
.cells { flex: 1; margin-top: 1px; min-height: 0; }
.acts { display: grid; grid-template-columns: 43px 11px 43px 43px; gap: 4px; margin-top: 3px; height: 22px; flex: none; }
.acts .btn { height: 22px; }
.acts .plain { display: flex; align-items: center; justify-content: center; width: 13px; }
.preview { flex: none; margin: 2px 0 0; background: #000; border: 1px solid #8a877a; }
.preview svg { display: block; width: 100%; height: 117px; }
.symrow { display: grid; grid-template-columns: 54px 30px 1fr; align-items: center; height: 20px; flex: none; white-space: nowrap; overflow: hidden; margin-right: -5px; margin-bottom: 2px; }
.symrow > span:last-child { padding-left: 8px; }
.spin { display: flex; background: linear-gradient(#d4e2ff, #b0c6f8); height: 14px; }
.spin button { flex: 1; display: flex; align-items: center; justify-content: center; }
.spin i { border: 3px solid transparent; border-right: 4px solid #4d6185; border-left: 0; }
.spin .r { border: 3px solid transparent; border-left: 4px solid #4d6185; border-right: 0; }

/* editor */
.editor { display: flex; flex-direction: column; flex: 1; min-width: 0; margin: 0 6px 0 4px; }
.tabs { display: flex; flex: none; height: 22px; align-items: center; }
.tab { display: flex; align-items: center; gap: 1px; height: 22px; width: 209px; margin-right: auto; padding-left: 5px; font-weight: bold; white-space: nowrap; background: #fff; border: 1px solid #919b9c; border-top: 3px solid #f5a52c; border-bottom: 0; border-radius: 3px 3px 0 0; }
.nav { width: 14px; padding: 0 1px; }
.frame { flex: 1; min-height: 0; margin-bottom: 2px; padding: 2px 2px 2px 1px; background: #fff; border: 1px solid #848c96; }
.sheet { display: block; width: 100%; height: 100%; background: #000; border-top: 1px solid #716f64; border-left: 1px solid #716f64; overflow: hidden; }
.sheet path { shape-rendering: crispEdges; }
.wires path { fill: none; stroke: #30b0f0; }
.part path { fill: none; stroke: #00c864; }
.port path { fill: none; stroke: #f0f; }
.sheet text { font: 13px "Liberation Mono", monospace; white-space: pre; }
.name text { fill: #d8cc00; }
.val text { fill: #c0c0c0; }
.sheet .io text { fill: #f0f; font-size: 14px; }

/* properties */
.props { width: 178px; }
.props .body { margin: 2px 1px 1px 1px; padding: 1px 1px 1px 0; }
.what { flex: none; height: 17px; background: #fff; line-height: 17px; white-space: nowrap; overflow: hidden; }
.ptools { display: flex; flex: none; height: 26px; padding: 0 2px; background: linear-gradient(90deg, #f8f7f2, #ece9d8); }
.ptools.two { height: 28px; padding-top: 3px; border-top: 1px solid #d0ccb8; }
.ab { color: #aca899; font-size: 11px; line-height: 12px; }
.ab span:first-child { margin-bottom: 5px; }
.ab span:last-child { margin-top: 5px; }
.abc { font-size: 9px; align-items: flex-start; line-height: 11px; }
.abc span { padding-top: 4px; }
.abc sub { font-size: 9px; line-height: 11px; padding-top: 8px; }
.gridbox { flex: 1; min-height: 0; background: #fff; border: 1px solid #7f9db9; overflow: hidden; }
table { width: 100%; border-spacing: 0; table-layout: fixed; }
.c1 { width: 13px; }
.c2 { width: 73px; }
td, th { height: 17px; padding: 0 0 0 2px; border: solid #d4d0c8; border-width: 0 0 1px 1px; font-weight: normal; text-align: left; line-height: 16px; white-space: nowrap; overflow: hidden; color: #333; }
th { color: #aca899; padding-left: 1px; }
.k { color: #000; }
td:first-child { padding: 0; background: #d4d0c8; border-left: 0; }
.grp th { font-weight: bold; font-size: 12px; background: #d4d0c8; }
.cur th { background: #d4d0c8; }
.cur td { color: #000; }
.pm { position: relative; display: block; width: 9px; height: 9px; margin-left: 2px; border: 1px solid #7898b5; border-radius: 1px; background: #fff; }
.pm::before, .plus::after { content: ""; position: absolute; left: 1px; top: 3px; width: 5px; height: 1px; background: #000; }
.plus::after { left: 3px; top: 1px; width: 1px; height: 5px; }
.desc { flex: none; height: 59px; margin-top: 3px; padding: 2px 4px; border: 1px solid #7f9db9; line-height: 16px; }
.desc h3 { font-weight: bold; }

/* status bar */
.status { display: flex; flex: none; height: 20px; align-items: center; padding: 0 5px 0 1px; border-top: 1px solid #a8a594; background: linear-gradient(#d8d4c4, #ece9d8 4px, #ece9d8 15px, #dcd8c8); }
.status span { height: 15px; padding: 0 4px; border-left: 1px solid #c4c0ae; box-shadow: inset 1px 0 #fff; line-height: 16px; }
.status .grow { flex: 1; border: 0; box-shadow: none; padding: 0; }
.status .s1 { width: 129px; }
.status .s2 { width: 88px; }
.status .s3 { width: 61px; }
.status .dim { color: #aca899; }

/* taskbar */
.taskbar { display: flex; flex: none; height: 30px; background: linear-gradient(#1f5fd8 0, #4a94f4 2px, #2862dc 6px, #245edb 24px, #1a48b0); color: #fff; }
.start { display: flex; align-items: center; gap: 4px; width: 97px; padding-left: 10px; border-radius: 0 10px 10px 0; background: linear-gradient(#2e7c2e, #5cb85a 4px, #3c943c 10px, #3a9a3a 22px, #256c25); color: #fff; font: italic bold 18px/24px "Noto Sans", sans-serif; text-shadow: 1px 1px 2px #123c12; box-shadow: inset -3px 0 4px #1c681c; }
.start svg { width: 20px; height: 20px; }
.quick { display: flex; align-items: center; gap: 7px; padding: 0 20px 0 11px; }
.tasks { display: flex; flex: 1; min-width: 0; gap: 2px; padding: 3px 13px 2px 0; }
.tasks button { flex: 1; min-width: 0; display: flex; align-items: center; gap: 4px; padding-left: 9px; border-radius: 3px; background: linear-gradient(#6aa4fa, #3c82f4 4px, #3c80f2 20px, #2c66d8); white-space: nowrap; overflow: hidden; }
.tasks .act { background: #1c4cb4; box-shadow: inset 1px 1px 2px #0c2c78; }
.tray { display: flex; align-items: center; gap: 2px; padding: 0 16px 0 0; background: linear-gradient(#1488e0, #20b4f8 3px, #0f94ea 8px, #1296ec 24px, #0c70c0); border-left: 1px solid #0a4898; }
.chev { margin-left: -9px; }
.chev svg { display: block; width: 18px; height: 18px; }
.tray time { margin-left: 8px; }
```
